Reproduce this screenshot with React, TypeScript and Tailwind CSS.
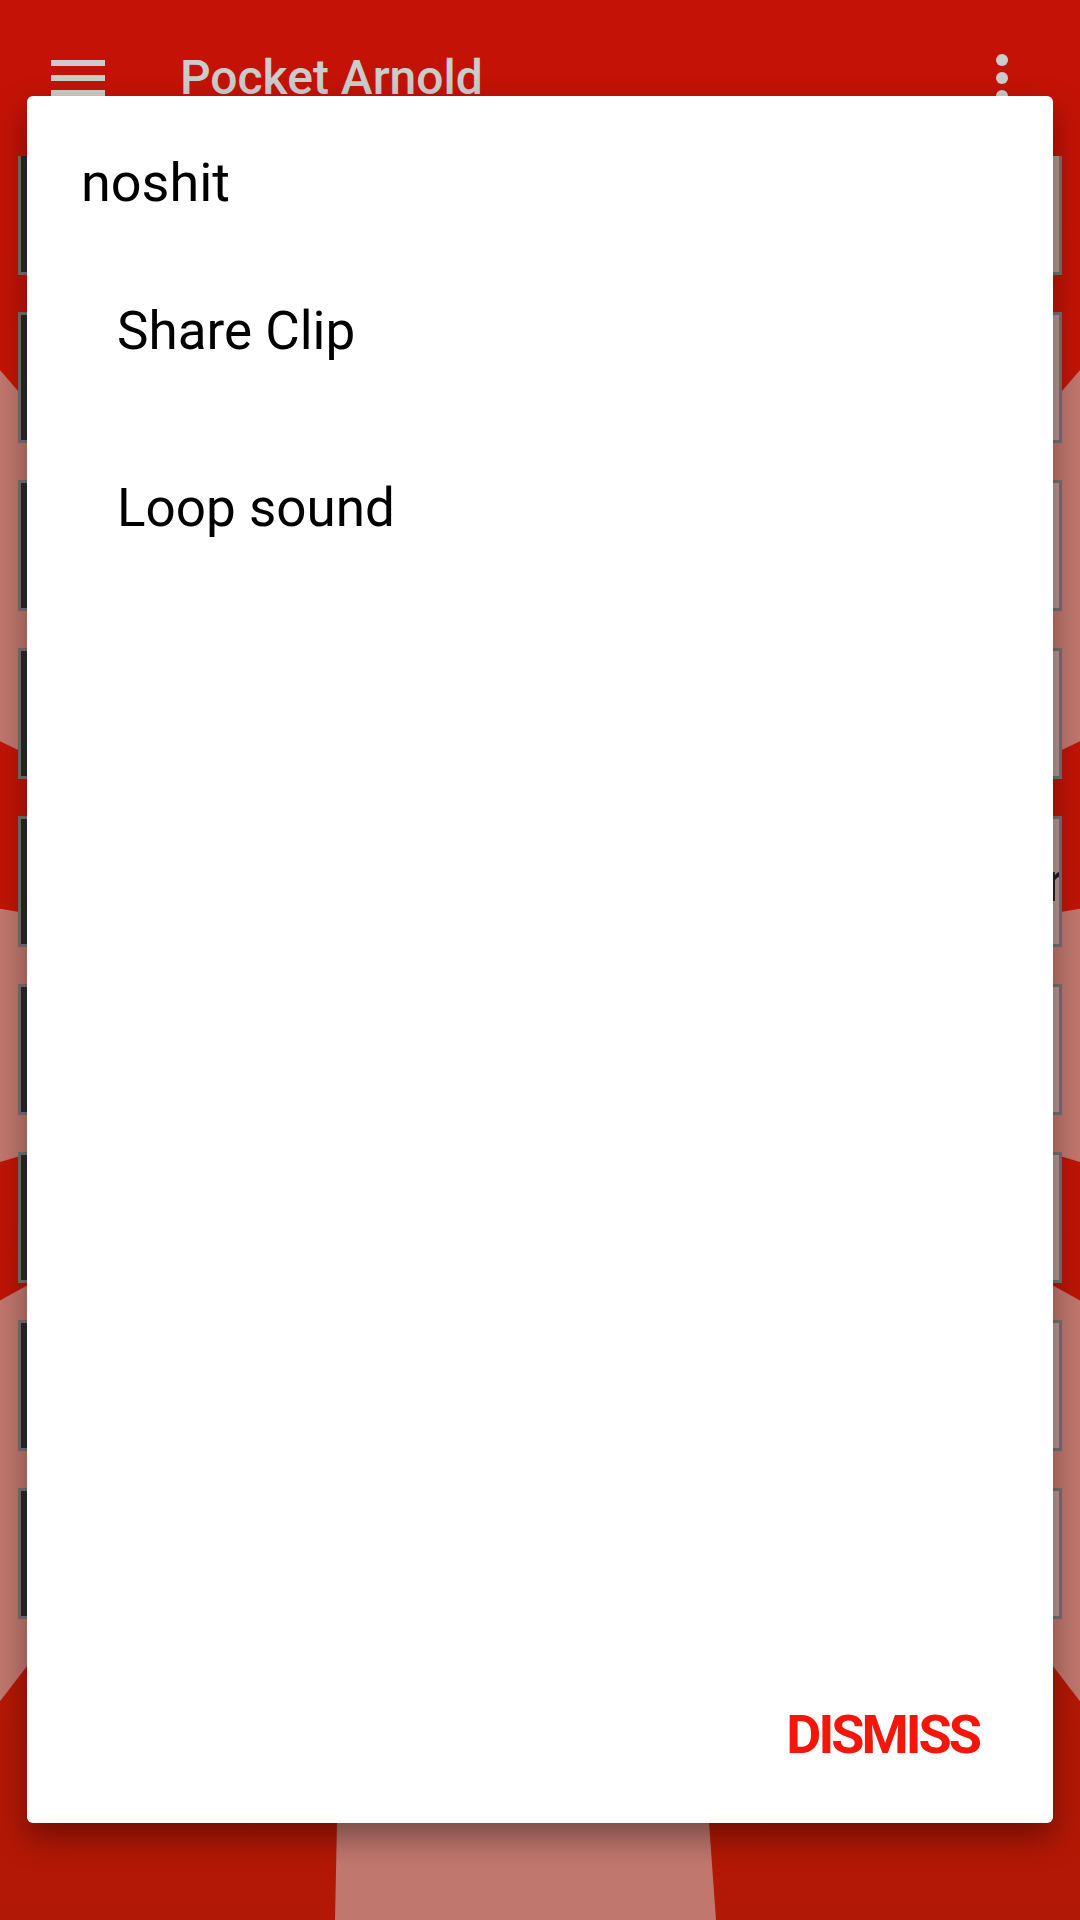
import React from 'react';

// sunburst rays (degrees, screen coords, clockwise from +x)
const PINK_RAYS: [number, number][] = [
  [-49.4, -25.6],
  [-9.6, 16.7],
  [29.1, 52.4],
  [127.6, 150.9],
  [163.3, 189.6],
  [205.6, 229.4],
  [258, 282],
];

const CX = 540;
const CY = 1000;
const R = 3000;

function rayPoints(a1: number, a2: number) {
  const p = (a: number) => {
    const r = (a * Math.PI) / 180;
    return `${(CX + R * Math.cos(r)).toFixed(1)},${(CY + R * Math.sin(r)).toFixed(1)}`;
  };
  return `${CX},${CY} ${p(a1)} ${p(a2)}`;
}

function Sunburst() {
  return (
    <svg className="absolute inset-0" width="1080" height="1920" viewBox="0 0 1080 1920">
      <defs>
        <linearGradient id="bgRed" x1="0" y1="0" x2="0" y2="1">
          <stop offset="0" stopColor="#f61808" />
          <stop offset="0.6" stopColor="#f01a08" />
          <stop offset="1" stopColor="#de1f07" />
        </linearGradient>
      </defs>
      <rect x="0" y="0" width="1080" height="1920" fill="url(#bgRed)" />
      {PINK_RAYS.map(([a, b], i) => (
        <polygon key={i} points={rayPoints(a, b)} fill="#f1958a" />
      ))}
      {/* downward ray, almost parallel edges */}
      <polygon points="354,1000 650,1000 716,1920 335,1920" fill="#f1958a" />
    </svg>
  );
}

function MenuIcon() {
  return (
    <svg width="72" height="72" viewBox="0 0 24 24" fill="#ffffff">
      <rect x="3" y="6" width="18" height="2" />
      <rect x="3" y="11" width="18" height="2" />
      <rect x="3" y="16" width="18" height="2" />
    </svg>
  );
}

function MoreIcon() {
  return (
    <svg width="72" height="72" viewBox="0 0 24 24" fill="#ffffff">
      <circle cx="12" cy="6" r="2" />
      <circle cx="12" cy="12" r="2" />
      <circle cx="12" cy="18" r="2" />
    </svg>
  );
}

function ClipButton({ label }: { label?: string }) {
  return (
    <div className="h-[131px] border-[3px] border-[#909090] bg-[#eac0bb] flex overflow-hidden">
      <div className="w-[128px] bg-[#353535]" />
      <div className="flex-1 flex items-center justify-end overflow-hidden">
        {label && (
          <span className="mr-[-6px] text-[56px] leading-[64px] text-[#2a2a2a]">{label}</span>
        )}
      </div>
    </div>
  );
}

export default function App() {
  const clips = ['', '', '', '', 'r', '', '', '', ''];

  return (
    <div className="relative w-[1080px] h-[1920px] overflow-hidden font-['Roboto',sans-serif]">
      <Sunburst />

      <div className="relative z-0 flex flex-col">
        <header className="relative z-10 h-[156px] bg-[#f61808] flex items-center pl-[42px] pr-[42px]">
          <MenuIcon />
          <h1 className="ml-[66px] flex-1 text-[48px] leading-[56px] font-medium text-white">Pocket Arnold</h1>
          <MoreIcon />
        </header>

        <main className="-mt-[12px] px-[18px] flex flex-col gap-[37px]">
          {clips.map((c, i) => (
            <ClipButton key={i} label={c} />
          ))}
        </main>
      </div>

      {/* dialog scrim */}
      <div className="absolute inset-0 bg-black/20" />

      <div className="absolute left-[27px] top-[96px] w-[1026px] h-[1727px] bg-white rounded-[6px] shadow-[0_14px_32px_rgba(0,0,0,0.38)] flex flex-col">
        <div className="pt-[55px] pb-[27px] pl-[54px] text-[54px] leading-[64px] text-black">noshit</div>
        <div className="flex flex-col">
          <div className="h-[177px] flex items-center pl-[90px] text-[53px] leading-[64px] text-black">Share Clip</div>
          <div className="h-[177px] flex items-center pl-[90px] text-[53px] leading-[64px] text-black">Loop sound</div>
        </div>
        <div className="flex-1" />
        <div className="flex justify-end pr-[74px] pb-[56px]">
          <span className="text-[54px] leading-[64px] font-bold tracking-[-3px] text-[#f4160a]">DISMISS</span>
        </div>
      </div>
    </div>
  );
}
